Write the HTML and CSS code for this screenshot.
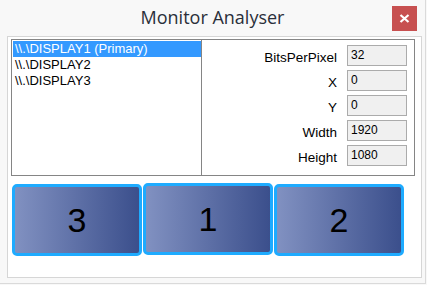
FILE: index.html
```html
<!DOCTYPE html>
<html lang="en">
<head>
  <meta charset="UTF-8">
  <title>Monitor Analyser</title>
  <link rel="stylesheet" href="styles.css">
</head>
<body>
  <div class="window">
    <!-- title bar -->
    <div class="titlebar">
      <span class="title">Monitor Analyser</span>
      <button class="close" aria-label="Close">
        <svg width="11" height="9" viewBox="0 0 11 9"><path d="M1.5 1 L9.5 8 M9.5 1 L1.5 8" stroke="#fff" stroke-width="2.2" fill="none"/></svg>
      </button>
    </div>

    <div class="panel">
      <div class="info">
        <!-- display list -->
        <ul class="displays">
          <li class="selected">\\.\DISPLAY1 (Primary)</li>
          <li>\\.\DISPLAY2</li>
          <li>\\.\DISPLAY3</li>
        </ul>

        <!-- properties of the selected display -->
        <div class="props">
          <label>BitsPerPixel</label><input type="text" value="32" readonly>
          <label>X</label><input type="text" value="0" readonly>
          <label>Y</label><input type="text" value="0" readonly>
          <label>Width</label><input type="text" value="1920" readonly>
          <label>Height</label><input type="text" value="1080" readonly>
        </div>
      </div>

      <!-- monitor layout -->
      <div class="monitors">
        <div class="monitor">3</div>
        <div class="monitor up">1</div>
        <div class="monitor">2</div>
      </div>
    </div>
  </div>
</body>
</html>
```

FILE: styles.css
```css
body {
  margin: 0;
  background: #f8f8f8;
  font-family: "Liberation Sans", Arial, sans-serif;
}
.window {
  width: 425px;
  height: 283px;
  border-right: 1px solid #dadada;
  border-bottom: 1px solid #dadada;
  background: #f8f8f8;
}
.titlebar {
  height: 36px;
  display: flex;
  align-items: flex-start;
  justify-content: center;
  position: relative;
}
.title {
  margin-top: 5px;
  font-family: "Open Sans", "Noto Sans", sans-serif;
  font-size: 18px;
  color: #2a2f3a;
}
.close {
  position: absolute;
  left: 392px;
  top: 6px;
  width: 25px;
  height: 25px;
  border: 0;
  padding: 0;
  background: #c75050;
  display: flex;
  align-items: center;
  justify-content: center;
}
.panel {
  margin-left: 7px;
  width: 410px;
  height: 238px;
  border: 1px solid #d6d6d6;
  background: #fff;
  padding: 2px 0 0 3px;
}
.info {
  width: 402px;
  height: 135px;
  border: 1px solid #858585;
  display: flex;
}
.displays {
  list-style: none;
  margin: 0;
  padding: 1px 0 0 1px;
  width: 188px;
  border-right: 1px solid #858585;
  font-size: 13px;
  line-height: 16px;
}
.displays li {
  padding-left: 2px;
  color: #000;
}
.displays li.selected {
  background: #3399ff;
  color: #fff;
}
.props {
  flex: 1;
  display: grid;
  grid-template-columns: 1fr 60px;
  column-gap: 10px;
  row-gap: 4px;
  align-content: start;
  padding: 5px 7px 0 0;
}
.props label {
  text-align: right;
  font-size: 13.5px;
  padding-top: 5px;
  line-height: 16px;
  color: #000;
}
.props input {
  box-sizing: border-box;
  width: 60px;
  height: 21px;
  margin: 0;
  border: 1px solid #ababab;
  background: #f0f0f0;
  font-family: "Liberation Sans", Arial, sans-serif;
  font-size: 12px;
  padding: 0 0 2px 3px;
  color: #000;
  outline: none;
}
.monitors {
  display: flex;
  gap: 1px;
  margin: 8px 0 0 1px;
}
.monitor {
  box-sizing: border-box;
  width: 130px;
  height: 72px;
  border: 3px solid #1eabff;
  border-radius: 5px;
  background: linear-gradient(to right, #8191c1, #3b4f8c);
  display: flex;
  align-items: center;
  justify-content: center;
  font-size: 34px;
  color: #000;
}
.monitor.up {
  margin-top: -1px;
}
```
